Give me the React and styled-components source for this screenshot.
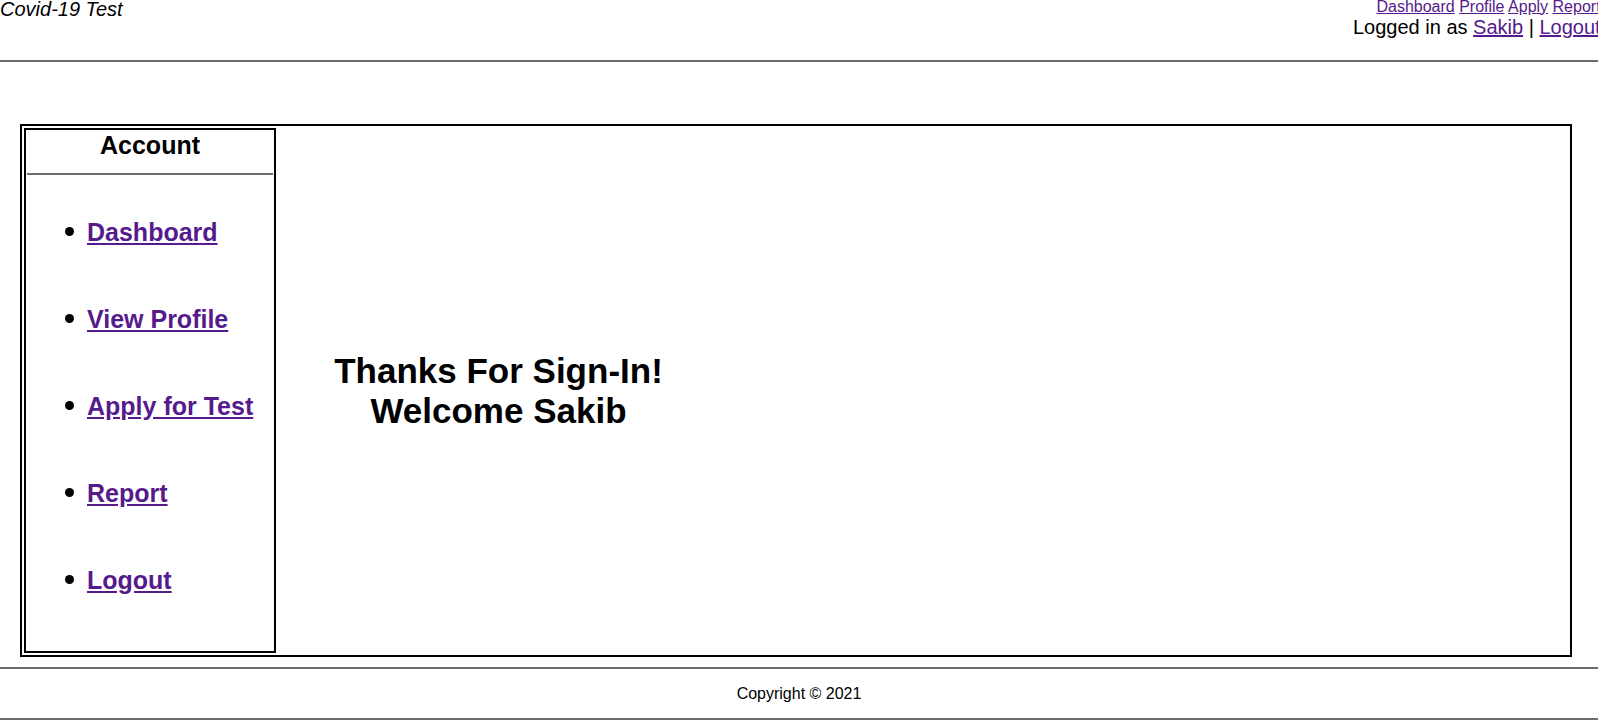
import React from "react";
import styled, { createGlobalStyle } from "styled-components";

const GlobalStyle = createGlobalStyle`
  html, body {
    margin: 0;
    padding: 0;
    overflow-x: hidden;
    background: #ffffff;
  }
  body {
    font-family: "Liberation Sans", Arial, sans-serif;
    font-size: 16px;
    color: #000;
  }
`;

const Page = styled.div`
  display: flex;
  flex-direction: column;
  width: 100%;
`;

const TopBar = styled.header`
  display: flex;
  justify-content: space-between;
  align-items: flex-start;
  height: 64px;
  margin-top: -2.5px;
  margin-right: -2.6px;
  box-sizing: border-box;
  border-bottom: 2px solid #6e6e6e;
`;

const SiteTitle = styled.div`
  font-style: italic;
  font-size: 20px;
  line-height: 18px;
  margin-top: 2.5px;
`;

const UserBox = styled.div`
  display: flex;
  flex-direction: column;
  align-items: flex-end;
  text-align: right;
`;

const QuickLinks = styled.div`
  font-size: 16px;
  line-height: 18.4px;
  white-space: nowrap;
`;

const UserLine = styled.div`
  font-size: 20px;
  line-height: 23px;
  white-space: nowrap;
`;

const Link = styled.a`
  color: #551a8b;
  text-decoration: underline;
  cursor: pointer;
`;

const Frame = styled.main`
  display: flex;
  gap: 2px;
  box-sizing: border-box;
  margin: 62.5px 0 0 20px;
  width: calc(100% - 46px);
  height: 533px;
  border: 2px solid #000;
  padding: 2px;
`;

const Sidebar = styled.nav`
  box-sizing: border-box;
  width: 252px;
  flex: none;
  border: 2px solid #000;
  padding: 1px;
  display: flex;
  flex-direction: column;
`;

const SideTitle = styled.h2`
  margin: 0 0 14px;
  font-size: 25px;
  line-height: 28px;
  font-weight: bold;
  text-align: center;
`;

const Rule = styled.div`
  height: 2px;
  background: #6e6e6e;
`;

const Menu = styled.ul`
  list-style: none;
  margin: 42.5px 0 0;
  padding: 0 0 0 38px;
  display: flex;
  flex-direction: column;
  gap: 59px;
`;

const MenuItem = styled.li`
  display: flex;
  align-items: center;
  font-size: 25px;
  line-height: 28px;
  font-weight: bold;

  &::before {
    content: "";
    width: 9px;
    height: 9px;
    border-radius: 50%;
    background: #000;
    margin-right: 13px;
    flex: none;
  }
`;

const Welcome = styled.section`
  width: 441px;
  flex: none;
  display: flex;
  align-items: center;
  justify-content: center;
`;

const WelcomeText = styled.h1`
  margin: 0;
  font-size: 35px;
  line-height: 40px;
  font-weight: bold;
  text-align: center;
`;

const Footer = styled.footer`
  margin-top: 10px;
  box-sizing: border-box;
  border-top: 2px solid #6e6e6e;
  border-bottom: 2px solid #6e6e6e;
  padding: 15.5px 0 15.4px;
  text-align: center;
  font-size: 16px;
  line-height: 18.4px;
`;

const menu = ["Dashboard", "View Profile", "Apply for Test", "Report", "Logout"];

export default function App() {
  return (
    <>
      <GlobalStyle />
      <Page>
        <TopBar>
          <SiteTitle>Covid-19 Test</SiteTitle>
          <UserBox>
            <QuickLinks>
              <Link>Dashboard</Link> <Link>Profile</Link> <Link>Apply</Link>{" "}
              <Link>Report</Link>
            </QuickLinks>
            <UserLine>
              Logged in as <Link>Sakib</Link> | <Link>Logout</Link>
            </UserLine>
          </UserBox>
        </TopBar>
        <Frame>
          <Sidebar>
            <SideTitle>Account</SideTitle>
            <Rule />
            <Menu>
              {menu.map((m) => (
                <MenuItem key={m}>
                  <Link>{m}</Link>
                </MenuItem>
              ))}
            </Menu>
          </Sidebar>
          <Welcome>
            <WelcomeText>
              Thanks For Sign-In!
              <br />
              Welcome Sakib
            </WelcomeText>
          </Welcome>
        </Frame>
        <Footer>Copyright © 2021</Footer>
      </Page>
    </>
  );
}
